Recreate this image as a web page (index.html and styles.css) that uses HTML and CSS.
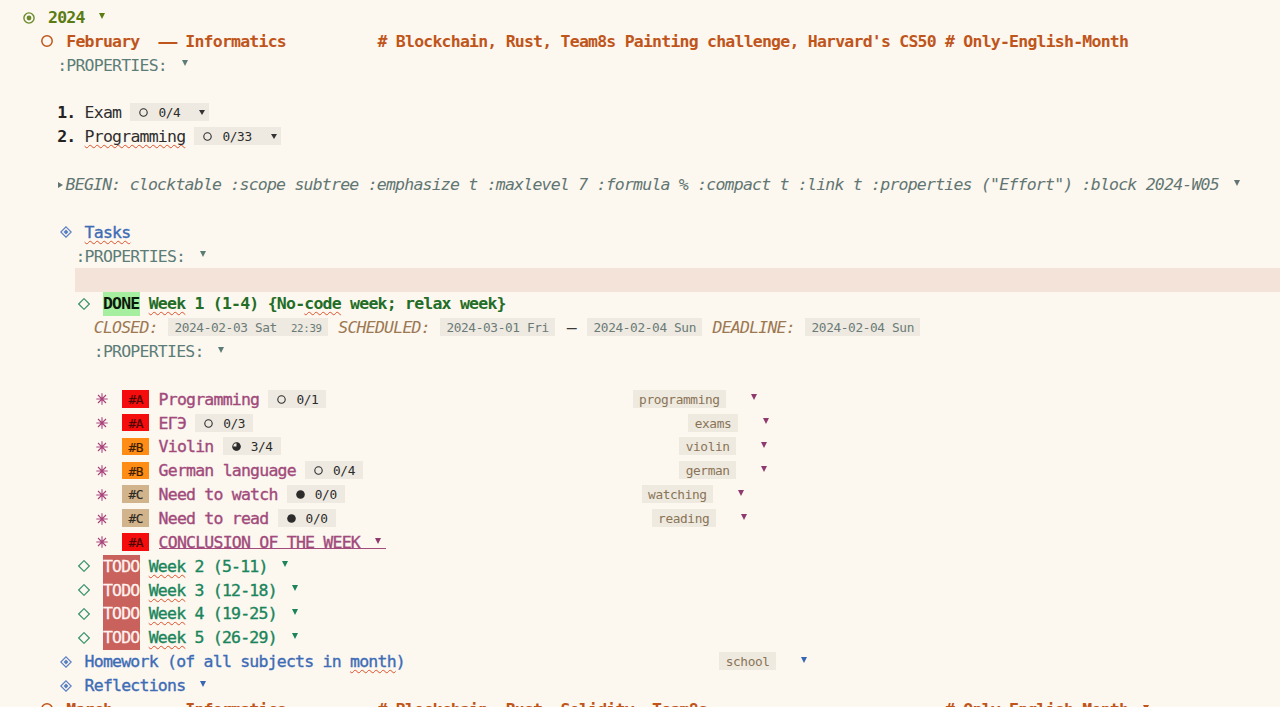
FILE: index.html
```html
<!DOCTYPE html>
<html lang="en">
<head>
<meta charset="utf-8">
<title>org agenda</title>
<link rel="stylesheet" href="styles.css">
</head>
<body>
<div class="doc">
<div class="line h1 c-l1"><span class="bullet"><svg viewBox="0 0 12 12" width="12" height="12"><circle cx="6" cy="6" r="5.1" fill="none" stroke="currentColor" stroke-width="1.4"/><circle cx="6" cy="6" r="2.4" fill="currentColor"/></svg></span><b>2024</b><span class="fold"></span></div>
<div class="line h2 c-l2"><span class="bullet"><svg viewBox="0 0 12 12" width="12" height="12"><circle cx="6" cy="6" r="5.2" fill="none" stroke="currentColor" stroke-width="1.5"/></svg></span><b>February  <span class="dash-wide">—</span> Informatics          # Blockchain, Rust, Team8s Painting challenge, Harvard's CS50 # Only-English-Month</b></div>
<div class="line b2 c-prop">:PROPERTIES:<span class="fold"></span></div>
<div class="line"></div>
<div class="line b2 c-list"><b>1.</b> Exam <span class="ck ck-f"><svg class="ci" viewBox="0 0 9 9" width="9" height="9"><circle cx="4.5" cy="4.5" r="3.7" fill="none" stroke="currentColor" stroke-width="1.1"/></svg>0/4<span class="fold"></span></span></div>
<div class="line b2 c-list"><b>2.</b> <span class="sp">Programming</span> <span class="ck ck-f"><svg class="ci" viewBox="0 0 9 9" width="9" height="9"><circle cx="4.5" cy="4.5" r="3.7" fill="none" stroke="currentColor" stroke-width="1.1"/></svg>0/33<span class="fold"></span></span></div>
<div class="line"></div>
<div class="line b2 c-begin"><i><span class="tri-r"></span>BEGIN: clocktable :scope subtree :emphasize t :maxlevel 7 :formula % :compact t :link t :properties ("Effort") :block 2024-W05</i><span class="fold"></span></div>
<div class="line"></div>
<div class="line h3 c-l3"><span class="bullet bl-l3"><svg viewBox="0 0 12 12" width="12" height="12"><path d="M6 0.8 L11.2 6 L6 11.2 L0.8 6 Z" fill="none" stroke="currentColor" stroke-width="1.2"/><path d="M6 3.6 L8.4 6 L6 8.4 L3.6 6 Z" fill="currentColor"/></svg></span><span class="sp">Tasks</span></div>
<div class="line b3 c-prop">:PROPERTIES:<span class="fold"></span></div>
<div class="line hl"></div>
<div class="line h4 c-done"><span class="bullet bl-l4"><svg viewBox="0 0 12 12" width="12" height="12"><path d="M6 0.7 L11.3 6 L6 11.3 L0.7 6 Z" fill="none" stroke="currentColor" stroke-width="1.2"/></svg></span><b class="kw-done">DONE</b> <b><span class="sp">Week</span> 1 (1-4) {No-<span class="sp">code</span> week; relax week}</b></div>
<div class="line b4"><i class="plan">CLOSED:</i> <span class="ts">2024-02-03 Sat<span class="ts-time">22:39</span></span> <i class="plan">SCHEDULED:</i> <span class="ts">2024-03-01 Fri</span> <span class="dash-mid">—</span> <span class="ts">2024-02-04 Sun</span> <i class="plan">DEADLINE:</i> <span class="ts">2024-02-04 Sun</span></div>
<div class="line b4 c-prop">:PROPERTIES:<span class="fold"></span></div>
<div class="line"></div>
<div class="line h5 c-l5"><span class="bullet bl-l5"><svg viewBox="0 0 12 12" width="12" height="12"><path d="M6 0.3V11.7M0.3 6H11.7M2 2L10 10M10 2L2 10" stroke="currentColor" stroke-width="1.1" fill="none"/></svg></span><span class="hc w-prog"><span class="pri pri-a">#A</span> Programming <span class="ck"><svg class="ci" viewBox="0 0 9 9" width="9" height="9"><circle cx="4.5" cy="4.5" r="3.7" fill="none" stroke="currentColor" stroke-width="1.1"/></svg>0/1</span></span><span class="tag">programming</span><span class="fold"></span></div>
<div class="line h5 c-l5"><span class="bullet bl-l5"><svg viewBox="0 0 12 12" width="12" height="12"><path d="M6 0.3V11.7M0.3 6H11.7M2 2L10 10M10 2L2 10" stroke="currentColor" stroke-width="1.1" fill="none"/></svg></span><span class="hc w-ege"><span class="pri pri-a">#A</span> ЕГЭ <span class="ck"><svg class="ci" viewBox="0 0 9 9" width="9" height="9"><circle cx="4.5" cy="4.5" r="3.7" fill="none" stroke="currentColor" stroke-width="1.1"/></svg>0/3</span></span><span class="tag">exams</span><span class="fold"></span></div>
<div class="line h5 c-l5"><span class="bullet bl-l5"><svg viewBox="0 0 12 12" width="12" height="12"><path d="M6 0.3V11.7M0.3 6H11.7M2 2L10 10M10 2L2 10" stroke="currentColor" stroke-width="1.1" fill="none"/></svg></span><span class="hc w-violin"><span class="pri pri-b">#B</span> Violin <span class="ck"><svg class="ci" viewBox="0 0 9 9" width="9" height="9"><circle cx="4.5" cy="4.5" r="3.7" fill="none" stroke="currentColor" stroke-width="1.1"/><path d="M4.5 4.5 L4.5 0.6 A3.9 3.9 0 1 1 0.6 4.5 Z" fill="currentColor"/></svg>3/4</span></span><span class="tag">violin</span><span class="fold"></span></div>
<div class="line h5 c-l5"><span class="bullet bl-l5"><svg viewBox="0 0 12 12" width="12" height="12"><path d="M6 0.3V11.7M0.3 6H11.7M2 2L10 10M10 2L2 10" stroke="currentColor" stroke-width="1.1" fill="none"/></svg></span><span class="hc w-german"><span class="pri pri-b">#B</span> German language <span class="ck"><svg class="ci" viewBox="0 0 9 9" width="9" height="9"><circle cx="4.5" cy="4.5" r="3.7" fill="none" stroke="currentColor" stroke-width="1.1"/></svg>0/4</span></span><span class="tag">german</span><span class="fold"></span></div>
<div class="line h5 c-l5"><span class="bullet bl-l5"><svg viewBox="0 0 12 12" width="12" height="12"><path d="M6 0.3V11.7M0.3 6H11.7M2 2L10 10M10 2L2 10" stroke="currentColor" stroke-width="1.1" fill="none"/></svg></span><span class="hc w-watch"><span class="pri pri-c">#C</span> Need to watch <span class="ck"><svg class="ci" viewBox="0 0 9 9" width="9" height="9"><circle cx="4.5" cy="4.5" r="4.3" fill="currentColor"/></svg>0/0</span></span><span class="tag">watching</span><span class="fold"></span></div>
<div class="line h5 c-l5"><span class="bullet bl-l5"><svg viewBox="0 0 12 12" width="12" height="12"><path d="M6 0.3V11.7M0.3 6H11.7M2 2L10 10M10 2L2 10" stroke="currentColor" stroke-width="1.1" fill="none"/></svg></span><span class="hc w-read"><span class="pri pri-c">#C</span> Need to read <span class="ck"><svg class="ci" viewBox="0 0 9 9" width="9" height="9"><circle cx="4.5" cy="4.5" r="4.3" fill="currentColor"/></svg>0/0</span></span><span class="tag">reading</span><span class="fold"></span></div>
<div class="line h5 c-l5"><span class="bullet bl-l5"><svg viewBox="0 0 12 12" width="12" height="12"><path d="M6 0.3V11.7M0.3 6H11.7M2 2L10 10M10 2L2 10" stroke="currentColor" stroke-width="1.1" fill="none"/></svg></span><span class="pri pri-a">#A</span> <span class="concl">CONCLUSION OF THE WEEK<span class="fold"></span></span></div>
<div class="line h4 c-todo"><span class="bullet bl-l4"><svg viewBox="0 0 12 12" width="12" height="12"><path d="M6 0.7 L11.3 6 L6 11.3 L0.7 6 Z" fill="none" stroke="currentColor" stroke-width="1.2"/></svg></span><span class="kw-todo">TODO</span> <span class="sp">Week</span> 2 (5-11)<span class="fold"></span></div>
<div class="line h4 c-todo"><span class="bullet bl-l4"><svg viewBox="0 0 12 12" width="12" height="12"><path d="M6 0.7 L11.3 6 L6 11.3 L0.7 6 Z" fill="none" stroke="currentColor" stroke-width="1.2"/></svg></span><span class="kw-todo">TODO</span> <span class="sp">Week</span> 3 (12-18)<span class="fold"></span></div>
<div class="line h4 c-todo"><span class="bullet bl-l4"><svg viewBox="0 0 12 12" width="12" height="12"><path d="M6 0.7 L11.3 6 L6 11.3 L0.7 6 Z" fill="none" stroke="currentColor" stroke-width="1.2"/></svg></span><span class="kw-todo">TODO</span> <span class="sp">Week</span> 4 (19-25)<span class="fold"></span></div>
<div class="line h4 c-todo"><span class="bullet bl-l4"><svg viewBox="0 0 12 12" width="12" height="12"><path d="M6 0.7 L11.3 6 L6 11.3 L0.7 6 Z" fill="none" stroke="currentColor" stroke-width="1.2"/></svg></span><span class="kw-todo">TODO</span> <span class="sp">Week</span> 5 (26-29)<span class="fold"></span></div>
<div class="line h3 c-l3"><span class="bullet bl-l3"><svg viewBox="0 0 12 12" width="12" height="12"><path d="M6 0.8 L11.2 6 L6 11.2 L0.8 6 Z" fill="none" stroke="currentColor" stroke-width="1.2"/><path d="M6 3.6 L8.4 6 L6 8.4 L3.6 6 Z" fill="currentColor"/></svg></span><span class="hc w-hw">Homework (of all subjects in <span class="sp">month</span>)</span><span class="tag">school</span><span class="fold"></span></div>
<div class="line h3 c-l3"><span class="bullet bl-l3"><svg viewBox="0 0 12 12" width="12" height="12"><path d="M6 0.8 L11.2 6 L6 11.2 L0.8 6 Z" fill="none" stroke="currentColor" stroke-width="1.2"/><path d="M6 3.6 L8.4 6 L6 8.4 L3.6 6 Z" fill="currentColor"/></svg></span>Reflections<span class="fold"></span></div>
<div class="line h2 c-l2"><span class="bullet"><svg viewBox="0 0 12 12" width="12" height="12"><circle cx="6" cy="6" r="5.2" fill="none" stroke="currentColor" stroke-width="1.5"/></svg></span><b>March     <span class="dash-wide">—</span> Informatics          # Blockchain, Rust, Solidity, Team8s                          # Only-English-Month</b><span class="fold"></span></div>
</div>
</body>
</html>
```

FILE: styles.css
```css
:root {
  --c: 9.152px;
  --lh: 23.86px;
}

html, body {
  margin: 0;
  background: #fcf7ef;
}

body {
  height: 707px;
  overflow: hidden;
}

.doc {
  padding-top: 6px;
  font-family: "DejaVu Sans Mono", "Liberation Mono", monospace;
  font-size: 16.5px;
  letter-spacing: -0.0473em;
  color: #2b2b2b;
}

.line {
  height: var(--lh);
  line-height: var(--lh);
  white-space: pre;
}

/* indentation */
.h1 { padding-left: 23px; }
.h2 { padding-left: 41.3px; }
.h3 { padding-left: 59.6px; }
.h4 { padding-left: 77.9px; }
.h5 { padding-left: 96.2px; }
.b2 { padding-left: 57.15px; }
.b3 { padding-left: 75.45px; }
.b4 { padding-left: 93.75px; }

.hl {
  margin-left: 75.45px;
  background: #f3e3d8;
}

/* bullets */
.bullet {
  display: inline-block;
  width: 25px;
  height: 12px;
  margin-bottom: 2px;
  vertical-align: middle;
}
.bullet svg { display: block; }

.c-l1 { color: #5b7c12; }
.c-l1 .bullet { color: #6a8a2c; }
.c-l2 { color: #c0551b; }
.c-l3 { color: #3d6cb6; -webkit-text-stroke: 0.35px currentColor; }
.bl-l3 { color: #5a80c2; }
.c-done { color: #236d27; }
.bl-l4 { color: #3b9470; }
.c-todo { color: #1a855b; -webkit-text-stroke: 0.35px currentColor; }
.c-l5 { color: #a14a7b; -webkit-text-stroke: 0.35px currentColor; }
.bl-l5 { color: #a8447c; }
.c-prop { color: #5c7d77; }
.c-list { color: #2e2e2e; }
.c-list b { color: #222; }
.c-begin { color: #617572; }

/* fold triangles */
.fold {
  display: inline-block;
  width: 0;
  height: 0;
  border-left: 3.5px solid transparent;
  border-right: 3.5px solid transparent;
  border-top: 6px solid currentColor;
  margin-left: 14.8px;
  margin-bottom: 5.6px;
  vertical-align: middle;
}
.c-l5 .fold { border-top-color: #8e3a6e; }
.c-l3 .fold { border-top-color: #3866b2; }

.tri-r {
  display: inline-block;
  width: 0;
  height: 0;
  border-top: 3px solid transparent;
  border-bottom: 3px solid transparent;
  border-left: 5.7px solid currentColor;
  margin-left: 1.3px;
  margin-right: 2.15px;
  margin-bottom: 2px;
  vertical-align: middle;
}

.dash-wide {
  display: inline-block;
  width: calc(2 * var(--c));
  text-align: center;
  transform: scaleX(1.9);
}

.dash-mid {
  display: inline-block;
  width: 11.5px;
  text-align: center;
  color: #3a3a3a;
}

/* spell check */
.sp {
  text-decoration: underline wavy #e0502a;
  text-decoration-thickness: 1px;
  text-underline-offset: 2px;
  text-decoration-skip-ink: none;
}

/* checkbox cookies */
.ck {
  display: inline-block;
  height: 18px;
  line-height: 20px;
  padding: 0 8px 0 9px;
  margin-bottom: 3px;
  font-size: 12.8px;
  letter-spacing: -0.03em;
  background: #eeeae1;
  color: #2b2b2b;
  vertical-align: middle;
  -webkit-text-stroke: 0;
}
.ck-f { padding-right: 4px; }
.ck .ci {
  margin-right: 10px;
  vertical-align: baseline;
}
.ck .fold {
  margin-left: 19px;
  margin-bottom: 3.6px;
  border-left-width: 3px;
  border-right-width: 3px;
  border-top: 5.5px solid #333;
}

/* timestamps */
.plan {
  color: #9c7853;
}
.ts {
  display: inline-block;
  height: 18px;
  line-height: 20px;
  padding: 0 6.4px;
  margin: 0 1px 3px;
  font-size: 12.8px;
  letter-spacing: -0.03em;
  background: #eeeae1;
  color: #6b7a77;
  vertical-align: middle;
}
.ts-time {
  margin-left: 14px;
  font-size: 10.8px;
  letter-spacing: -0.03em;
}

/* keywords */
.kw-done {
  display: inline-block;
  height: var(--lh);
  vertical-align: top;
  background: #a6efa0;
  color: #0b1a0b;
}
.kw-todo {
  display: inline-block;
  height: var(--lh);
  vertical-align: top;
  background: #c9615c;
  color: #fff3f0;
  -webkit-text-stroke: 0.3px #fff3f0;
}

/* priorities */
.pri {
  display: inline-block;
  width: 27.45px;
  height: 17.5px;
  line-height: 19px;
  margin-left: 0.8px;
  margin-bottom: 3px;
  text-align: center;
  font-size: 12.8px;
  letter-spacing: -0.03em;
  vertical-align: middle;
  -webkit-text-stroke: 0.2px currentColor;
}
.pri-a { background: #f50d0d; color: #4a0505; }
.pri-b { background: #ff8c14; color: #3d2000; }
.pri-c { background: #d2b48c; color: #2e2a24; }

/* headline content column widths (tags follow) */
.hc { display: inline-block; }
.w-prog { width: 511.5px; }
.w-ege { width: 567.1px; }
.w-violin { width: 558.1px; }
.w-german { width: 558.1px; }
.w-watch { width: 520.5px; }
.w-read { width: 530.5px; }
.w-hw { width: 634.7px; }

.tag {
  display: inline-block;
  height: 18px;
  line-height: 20px;
  padding: 0 6.4px;
  margin-bottom: 3px;
  font-size: 12.8px;
  letter-spacing: -0.03em;
  background: #efeadf;
  color: #8a7458;
  vertical-align: middle;
  -webkit-text-stroke: 0;
}
.tag + .fold { margin-left: 25px; }

.concl {
  padding-right: 5px;
  background: linear-gradient(#a14a7b, #a14a7b) no-repeat left bottom 2.5px / 100% 1.2px;
}
```
